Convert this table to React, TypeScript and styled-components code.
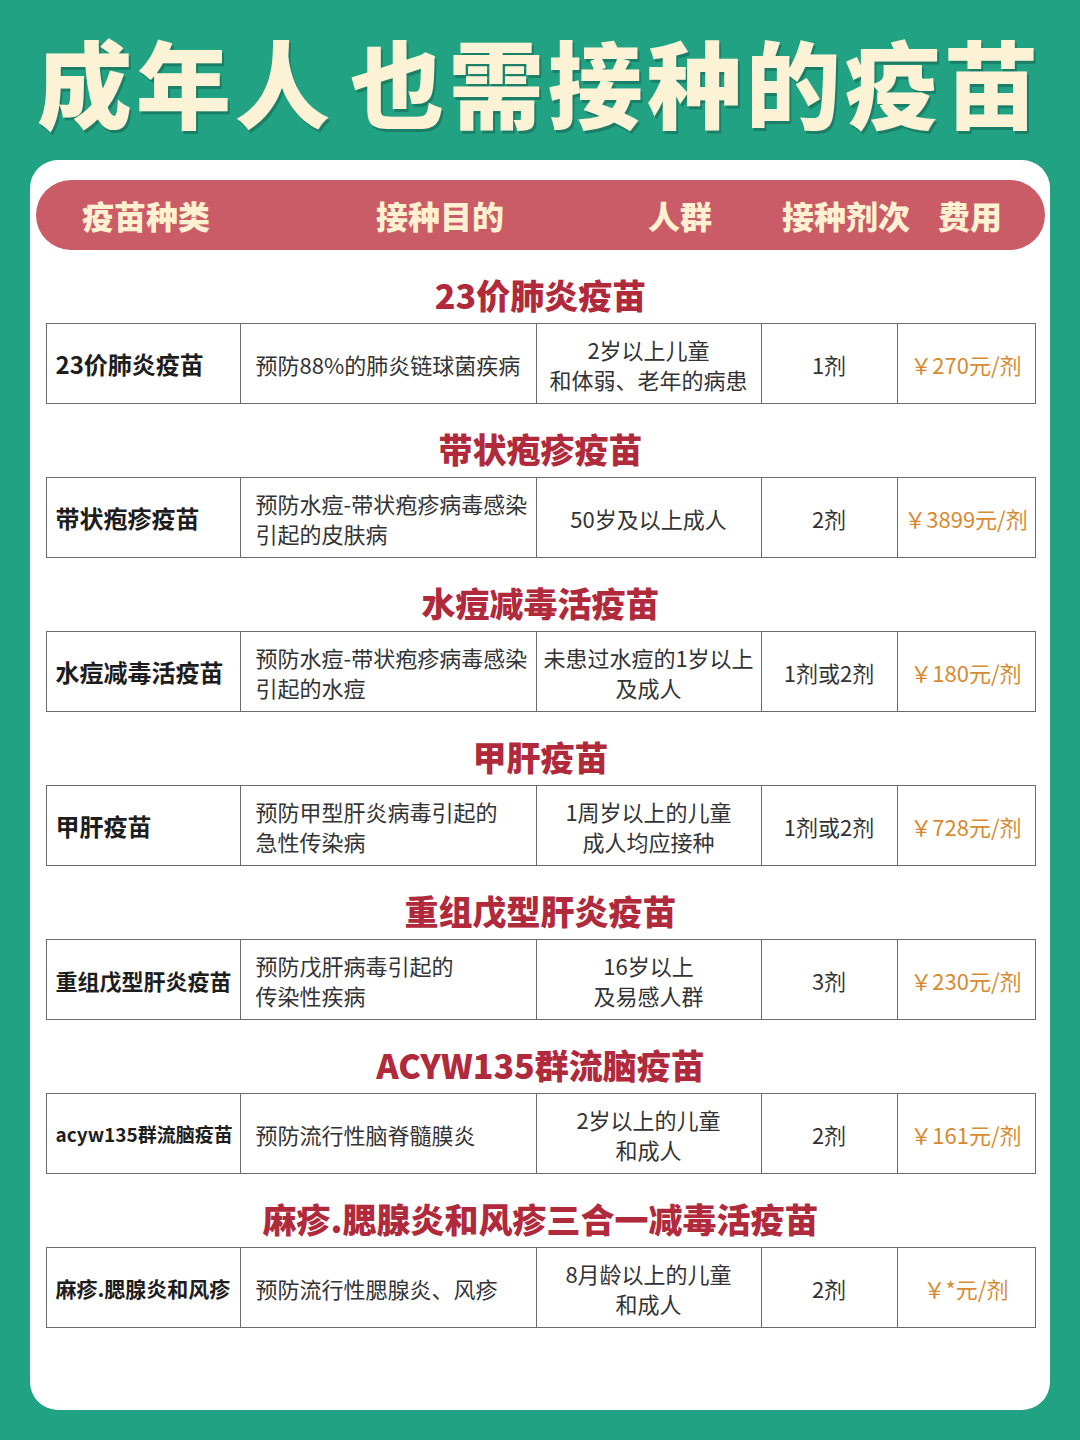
import React from 'react'
import styled, { createGlobalStyle } from 'styled-components'

const GlobalStyle = createGlobalStyle`
  html, body {
    margin: 0;
    padding: 0;
    background: #20a283;
  }
  body {
    font-family: "Noto Sans CJK SC", "Noto Sans", sans-serif;
  }
`

const Page = styled.div`
  width: 1080px;
  height: 1440px;
  background: #20a283;
  display: flex;
  flex-direction: column;
  align-items: center;
  box-sizing: border-box;
`

const Title = styled.h1`
  margin: 0;
  height: 160px;
  display: flex;
  align-items: center;
  justify-content: center;
  font-family: "Noto Sans CJK SC", sans-serif;
  font-weight: 900;
  font-size: 95px;
  letter-spacing: 4px;
  word-spacing: -10px;
  color: #fcf3d6;
  text-shadow: 2px 3px 0 rgba(20, 60, 50, 0.35);
  white-space: pre;
`

const Card = styled.div`
  width: 1020px;
  height: 1250px;
  background: #fff;
  border-radius: 28px;
  padding: 20px 5px 0 6px;
  box-sizing: border-box;
  display: flex;
  flex-direction: column;
  align-items: center;
`

const HeaderPill = styled.div`
  width: 100%;
  height: 70px;
  border-radius: 35px;
  background: #c95c67;
  display: grid;
  grid-template-columns: 294px 272px 134px 156px auto;
  align-items: center;
  padding-left: 46px;
  box-sizing: border-box;
`

const HeaderLabel = styled.div`
  font-weight: 900;
  font-size: 32px;
  color: #fdf1d2;
`

const Section = styled.section`
  width: 990px;
  display: flex;
  flex-direction: column;
`

const SectionTitle = styled.h2`
  margin: 0;
  padding: 25px 0 8px;
  line-height: 40px;
  text-align: center;
  font-weight: 900;
  font-size: 34px;
  color: #b12a3c;
`

const Row = styled.div`
  display: grid;
  grid-template-columns: 193px 296px 225px 136px 138px;
  height: 81px;
  border: 1px solid #6b6b6b;
  box-sizing: border-box;
`

const Cell = styled.div<{ $align?: 'left' | 'center' }>`
  display: flex;
  align-items: center;
  justify-content: ${p => (p.$align === 'left' ? 'flex-start' : 'center')};
  text-align: ${p => p.$align ?? 'center'};
  padding: 0 0 0 ${p => (p.$align === 'left' ? '15px' : '0')};
  min-width: 0;
  border-left: 1px solid #6b6b6b;
  font-size: 22px;
  line-height: 30px;
  color: #333;
  white-space: pre;
  &:first-child {
    border-left: none;
  }
`

const NameCell = styled(Cell)<{ $size: number }>`
  padding: 0 0 0 9px;
  font-weight: 700;
  font-size: ${p => p.$size}px;
  color: #1d1d1d;
`

const PriceCell = styled(Cell)`
  color: #d68a31;
`

const VACCINES = [
  {
    title: '23价肺炎疫苗',
    name: '23价肺炎疫苗',
    size: 24,
    purpose: '预防88%的肺炎链球菌疾病',
    people: '2岁以上儿童\n和体弱、老年的病患',
    doses: '1剂',
    price: '￥270元/剂',
  },
  {
    title: '带状疱疹疫苗',
    name: '带状疱疹疫苗',
    size: 24,
    purpose: '预防水痘-带状疱疹病毒感染\n引起的皮肤病',
    people: '50岁及以上成人',
    doses: '2剂',
    price: '￥3899元/剂',
  },
  {
    title: '水痘减毒活疫苗',
    name: '水痘减毒活疫苗',
    size: 24,
    purpose: '预防水痘-带状疱疹病毒感染\n引起的水痘',
    people: '未患过水痘的1岁以上\n及成人',
    doses: '1剂或2剂',
    price: '￥180元/剂',
  },
  {
    title: '甲肝疫苗',
    name: '甲肝疫苗',
    size: 24,
    purpose: '预防甲型肝炎病毒引起的\n急性传染病',
    people: '1周岁以上的儿童\n成人均应接种',
    doses: '1剂或2剂',
    price: '￥728元/剂',
  },
  {
    title: '重组戊型肝炎疫苗',
    name: '重组戊型肝炎疫苗',
    size: 22,
    purpose: '预防戊肝病毒引起的\n传染性疾病',
    people: '16岁以上\n及易感人群',
    doses: '3剂',
    price: '￥230元/剂',
  },
  {
    title: 'ACYW135群流脑疫苗',
    name: 'acyw135群流脑疫苗',
    size: 19,
    purpose: '预防流行性脑脊髓膜炎',
    people: '2岁以上的儿童\n和成人',
    doses: '2剂',
    price: '￥161元/剂',
  },
  {
    title: '麻疹.腮腺炎和风疹三合一减毒活疫苗',
    name: '麻疹.腮腺炎和风疹',
    size: 21,
    purpose: '预防流行性腮腺炎、风疹',
    people: '8月龄以上的儿童\n和成人',
    doses: '2剂',
    price: '￥*元/剂',
  },
]

const HEADERS = ['疫苗种类', '接种目的', '人群', '接种剂次', '费用']

function App() {
  return (
    <Page>
      <GlobalStyle />
      <Title>{'成年人 也需接种的疫苗'}</Title>
      <Card>
        <HeaderPill>
          {HEADERS.map(label => (
            <HeaderLabel key={label}>{label}</HeaderLabel>
          ))}
        </HeaderPill>
        {VACCINES.map(v => (
          <Section key={v.title}>
            <SectionTitle>{v.title}</SectionTitle>
            <Row>
              <NameCell $align="left" $size={v.size}>
                {v.name}
              </NameCell>
              <Cell $align="left">{v.purpose}</Cell>
              <Cell>{v.people}</Cell>
              <Cell>{v.doses}</Cell>
              <PriceCell>{v.price}</PriceCell>
            </Row>
          </Section>
        ))}
      </Card>
    </Page>
  )
}

export default App
